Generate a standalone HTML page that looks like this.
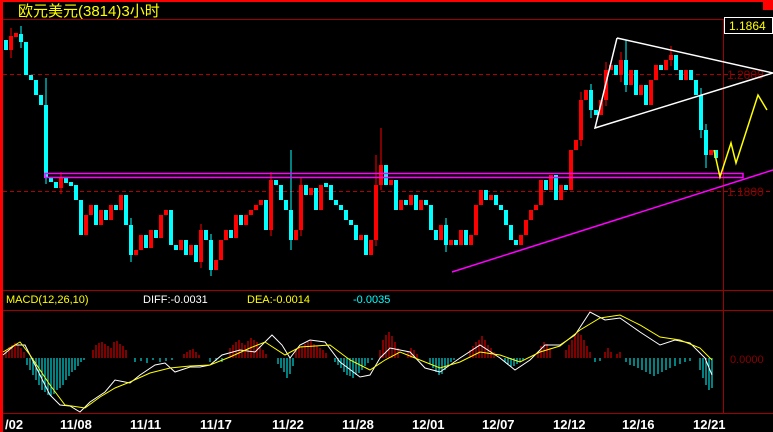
<!DOCTYPE html>
<html><head><meta charset="utf-8"><style>
html,body{margin:0;padding:0;background:#000;width:773px;height:432px;overflow:hidden}
svg{display:block}
text{font-family:"Liberation Sans","Noto Sans CJK SC",sans-serif}
</style></head><body>
<svg width="773" height="432" viewBox="0 0 773 432" xmlns="http://www.w3.org/2000/svg">
<rect width="773" height="432" fill="#000"/>
<rect x="0" y="0" width="773" height="2" fill="#f00"/>
<rect x="0" y="0" width="3" height="432" fill="#f00"/>
<rect x="763" y="0" width="10" height="10" fill="#f00"/>
<text x="18" y="16" font-size="15" fill="#ff0">欧元美元(3814)3小时</text>
<g stroke="#a00000" stroke-width="1">
<line x1="3" y1="19.5" x2="773" y2="19.5"/>
<line x1="3" y1="290.5" x2="773" y2="290.5"/>
<line x1="3" y1="310.5" x2="773" y2="310.5"/>
<line x1="3" y1="413.5" x2="773" y2="413.5"/>
<line x1="723.5" y1="19" x2="723.5" y2="413"/>
</g>
<g stroke="#b00000" stroke-width="1" stroke-dasharray="4,3">
<line x1="3" y1="74.5" x2="773" y2="74.5"/>
<line x1="3" y1="191.5" x2="773" y2="191.5"/>
</g>
<text x="727" y="79" font-size="12" fill="#8a0000">1.2000</text>
<text x="727" y="196" font-size="12" fill="#8a0000">1.1800</text>
<text x="730" y="363" font-size="11" fill="#8a0000">0.0000</text>
<rect x="724.5" y="17.5" width="48" height="16" fill="#000" stroke="#fff"/>
<text x="729" y="30" font-size="12" fill="#ff0">1.1864</text>
<path stroke="#f00" stroke-width="4" fill="none" d="M11 36V50M16 33V37M61 178V188M86 215V235M91 205V215M101 210V225M111 205V220M121 195V210M136 250V255M141 235V250M151 230V248M161 215V238M166 210V215M181 240V250M191 245V255M201 230V262M216 260V270M221 240V260M226 230V240M236 215V238M246 215V225M251 210V215M256 205V210M261 200V205M271 180V230M296 230V240M301 185V230M311 188V195M321 185V210M361 235V240M371 240V255M376 185V240M381 165V185M391 180V185M401 200V210M411 195V205M421 200V210M441 225V240M451 240V245M461 230V245M471 235V245M476 205V235M481 190V205M491 195V200M521 235V245M526 220V235M531 210V220M536 205V210M541 180V205M551 175V190M561 185V200M571 150V190M576 140V150M581 100V140M586 90V100M601 100V115M606 70V100M611 65V70M621 60V75M631 70V85M641 85V95M651 80V105M656 65V80M666 60V70M671 55V60M686 70V80M711 150V155"/>
<path stroke="#f00" stroke-width="1" fill="none" d="M11 28V58M61 172V194M201 224V268M271 172V236M301 178V236M376 155V246M381 128V190M581 92V146M606 62V106M621 52V82M671 46V66"/>
<path stroke="#0ff" stroke-width="4" fill="none" d="M6 40V50M21 34V42M26 42V75M31 75V80M36 80V95M41 95V105M46 105V178M51 178V182M56 182V188M66 178V183M71 182V186M76 185V200M81 200V235M96 205V225M106 210V220M116 205V210M126 195V225M131 225V255M146 235V248M156 230V238M171 210V245M176 245V250M186 240V255M196 245V262M206 230V240M211 240V270M231 230V238M241 215V225M266 200V230M276 180V185M281 185V200M286 200V210M291 210V240M306 185V195M316 188V210M326 183V187M331 185V200M336 200V205M341 205V210M346 210V220M351 220V225M356 225V240M366 235V255M386 165V185M396 180V210M406 200V205M416 195V210M426 200V205M431 205V230M436 230V240M446 225V245M456 240V245M466 230V245M486 190V200M496 195V205M501 205V210M506 210V225M511 225V240M516 240V245M546 180V190M556 175V200M566 185V190M591 90V110M596 110V115M616 65V75M626 60V85M636 70V95M646 85V105M661 65V70M676 55V70M681 70V80M691 70V80M696 80V95M701 95V130M706 130V155M716 150V158"/>
<path stroke="#0ff" stroke-width="1" fill="none" d="M21 26V48M46 78V184M131 218V262M211 234V276M291 150V250M446 218V252M591 84V118M626 40V92M701 88V138M706 124V168"/>
<g fill="none" stroke="#f0f" stroke-width="1.5">
<rect x="45" y="173.5" width="698" height="4"/>
<line x1="452" y1="272" x2="773" y2="170"/>
</g>
<g fill="none" stroke="#fff" stroke-width="1.5">
<polyline points="617,38 773,73 595,128 617,38"/>
</g>
<polyline fill="none" stroke="#ff0" stroke-width="1.5" points="714,150 720,177 731,143 736,163 758,95 767,110"/>
<text x="6" y="303" font-size="11" fill="#ff0">MACD(12,26,10)</text>
<text x="143" y="303" font-size="11" fill="#fff">DIFF:-0.0031</text>
<text x="247" y="303" font-size="11" fill="#ff0">DEA:-0.0014</text>
<text x="353" y="303" font-size="11" fill="#0ff">-0.0035</text>
<path stroke="#f00" stroke-width="1" fill="none" d="M6 358V350M9 358V347M12 358V345M15 358V343M18 358V345M21 358V348M24 358V352M93 358V350M96 358V345M99 358V343M102 358V342M105 358V344M108 358V346M111 358V348M114 358V342M117 358V341M120 358V344M123 358V346M126 358V350M184 358V354M187 358V352M190 358V350M193 358V349M196 358V352M199 358V355M230 358V348M233 358V345M236 358V342M239 358V340M242 358V343M245 358V345M248 358V341M251 358V338M254 358V340M257 358V342M260 358V346M263 358V350M266 358V354M296 358V350M299 358V348M302 358V346M305 358V344M308 358V342M311 358V341M314 358V344M317 358V346M320 358V348M323 358V350M326 358V353M380 358V350M383 358V340M386 358V335M389 358V332M392 358V336M395 358V342M398 358V348M408 358V352M411 358V348M414 358V350M417 358V354M470 358V350M473 358V346M476 358V342M479 358V340M482 358V336M485 358V340M488 358V345M491 358V348M494 358V352M538 358V352M541 358V346M544 358V342M547 358V344M550 358V348M566 358V350M569 358V345M572 358V340M575 358V336M578 358V333M581 358V335M584 358V340M587 358V346M590 358V352M605 358V352M608 358V348M611 358V352M617 358V354M620 358V352"/>
<path stroke="#0ff" stroke-width="1" fill="none" d="M27 358V365M30 358V370M33 358V375M36 358V380M39 358V385M42 358V390M45 358V392M48 358V395M51 358V396M54 358V394M57 358V390M60 358V388M63 358V385M66 358V380M69 358V376M72 358V372M75 358V370M78 358V366M81 358V362M84 358V360M135 358V362M141 358V361M147 358V363M153 358V360M160 358V362M166 358V361M172 358V360M210 358V362M216 358V361M222 358V362M278 358V364M281 358V368M284 358V372M287 358V378M290 358V374M293 358V366M335 358V362M338 358V365M341 358V368M344 358V372M347 358V375M350 358V376M353 358V378M356 358V375M359 358V373M362 358V370M365 358V366M368 358V363M372 358V360M430 358V364M433 358V368M436 358V372M439 358V375M442 358V374M445 358V370M448 358V366M451 358V362M454 358V360M505 358V362M508 358V365M511 358V367M514 358V366M517 358V364M520 358V362M523 358V360M595 358V362M600 358V361M626 358V362M630 358V365M634 358V366M638 358V368M642 358V370M646 358V372M650 358V374M654 358V376M658 358V374M662 358V372M666 358V370M670 358V368M675 358V366M680 358V364M685 358V362M690 358V361M700 358V370M703 358V378M706 358V385M709 358V390M712 358V388"/>
<polyline fill="none" stroke="#fff" stroke-width="1" points="3,355 15,345 25,345 35,365 50,395 60,405 70,406 80,412 90,402 105,392 115,380 130,383 140,375 155,365 165,363 175,372 190,367 200,367 210,365 222,355 240,350 255,352 272,335 282,345 290,358 300,345 310,340 325,342 340,362 360,377 370,375 380,358 390,348 410,352 425,368 440,372 460,358 480,345 500,358 515,370 530,360 545,345 560,345 575,335 590,312 605,320 620,318 640,332 660,345 675,340 690,343 705,358 712,375"/>
<polyline fill="none" stroke="#ff0" stroke-width="1" points="3,352 20,342 30,355 50,385 65,405 85,408 100,397 115,388 130,382 150,373 170,368 190,366 210,365 230,357 250,348 265,342 285,355 300,347 330,345 350,360 370,370 385,360 400,352 420,360 440,368 460,362 480,352 500,355 520,362 540,352 560,346 580,330 600,318 620,315 640,325 660,337 680,340 700,348 712,360"/>
<g font-size="13" font-weight="bold" fill="#fff">
<text x="5" y="429">/02</text>
<text x="60" y="429">11/08</text>
<text x="130" y="429">11/11</text>
<text x="200" y="429">11/17</text>
<text x="272" y="429">11/22</text>
<text x="342" y="429">11/28</text>
<text x="412" y="429">12/01</text>
<text x="482" y="429">12/07</text>
<text x="553" y="429">12/12</text>
<text x="622" y="429">12/16</text>
<text x="693" y="429">12/21</text>
</g>
</svg>
</body></html>
